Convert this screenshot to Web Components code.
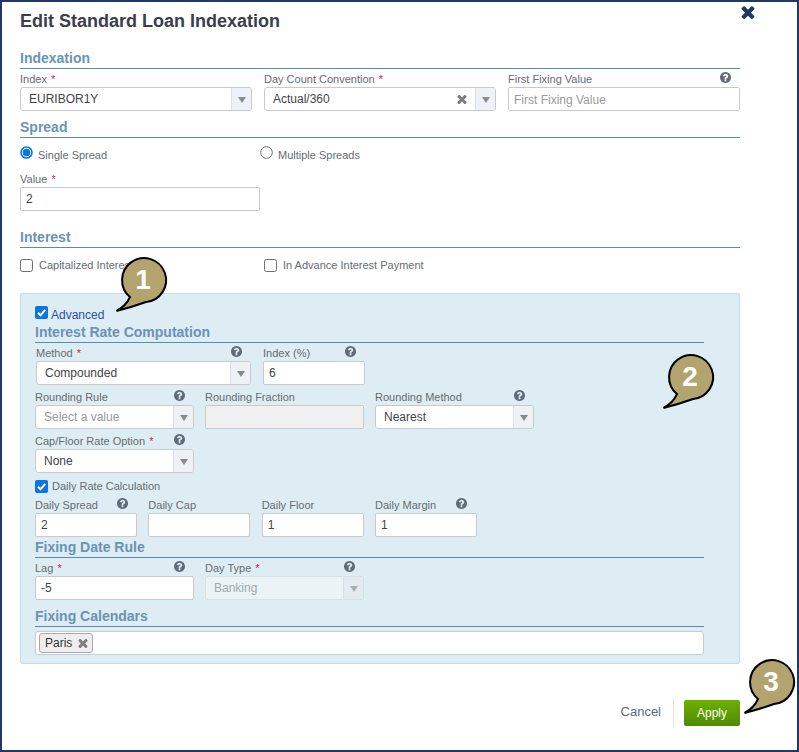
<!DOCTYPE html>
<html>
<head>
<meta charset="utf-8">
<title>Edit Standard Loan Indexation</title>
<style>
  html, body { margin: 0; padding: 0; background: #fff; }
  body { font-family: "Liberation Sans", Arial, sans-serif; }
  .row { display: grid; }
</style>
</head>
<body>
<script>
const HELP_PATH = "M1024 1376v-192q0-14-9-23t-23-9h-192q-14 0-23 9t-9 23v192q0 14 9 23t23 9h192q14 0 23-9t9-23zm256-672q0-88-55.500-163t-138.500-116-170-41q-243 0-371 213-15 24 8 42l132 100q7 6 19 6 16 0 25-12 53-68 86-92 34-24 86-24 48 0 85.500 26t37.500 59q0 38-20 61t-68 45q-63 28-115.500 86.500t-52.500 125.500v36q0 14 9 23t23 9h192q14 0 23-9t9-23q0-19 21.500-49.500t54.500-49.500q32-18 49-28.500t46-35 44.500-48 28-60.500 12.500-81zm384 192q0 209-103 385.500t-279.500 279.500-385.500 103-385.500-103-279.500-279.500-103-385.500 103-385.500 279.500-279.500 385.500-103 385.500 103 279.500 279.500 103 385.500z";
const TIMES_PATH = "M1490 1322q0 40-28 68l-136 136q-28 28-68 28t-68-28l-294-294-294 294q-28 28-68 28t-68-28l-136-136q-28-28-28-68t28-68l294-294-294-294q-28-28-28-68t28-68l136-136q28-28 68-28t68 28l294 294 294-294q28-28 68-28t68 28l136 136q28 28 28 68t-28 68l-294 294 294 294q28 28 28 68z";

const times = (size, color) => `<svg width="${size}" height="${size}" viewBox="250 250 1292 1292" style="display:block"><path fill="${color}" d="${TIMES_PATH}"/></svg>`;

class EditDialog extends HTMLElement {
  constructor() {
    super();
    this.attachShadow({ mode: "open" });
    this.shadowRoot.innerHTML = `
      <style>
        :host { display: block; box-sizing: border-box; width: 799px; height: 752px; border: 2px solid #1f3864; padding: 0 57px 0 18px; overflow: hidden; font-family: "Liberation Sans", Arial, sans-serif; }
        header { display: flex; justify-content: space-between; height: 46px; margin-right: -15px; }
        h1 { margin: 7px 0 0; font-size: 18px; line-height: 24px; font-weight: bold; color: #37404c; }
        .close { margin-top: 3px; }
        footer { display: flex; justify-content: flex-end; align-items: center; margin-top: 34px; height: 29px; }
      </style>
      <header><h1></h1><div class="close">${times(14, "#1f3864")}</div></header>
      <slot></slot>
      <footer><slot name="footer"></slot></footer>`;
  }
  connectedCallback() {
    this.shadowRoot.querySelector("h1").textContent = this.dataset.title;
  }
}

class SectionHeading extends HTMLElement {
  constructor() {
    super();
    this.attachShadow({ mode: "open" });
    this.shadowRoot.innerHTML = `
      <style>
        :host { display: block; height: 20px; border-bottom: 1px solid #5b8cae; font-size: 14px; line-height: 20px; font-weight: bold; color: #6b93b5; }
      </style>
      <slot></slot>`;
  }
}

class FormField extends HTMLElement {
  constructor() {
    super();
    this.attachShadow({ mode: "open" });
    this.shadowRoot.innerHTML = `
      <style>
        :host { display: block; min-width: 0; }
        .label { display: flex; justify-content: space-between; align-items: center; height: 18px; font-size: 11px; line-height: 18px; color: #666c72; white-space: nowrap; }
        .text { transform: translateY(1px); }
        .req { color: #d6174f; margin-left: 1px; }
        svg { display: block; margin: -1px 9.500px 0 0; }
      </style>
      <div class="label"><span class="text"></span></div>
      <slot></slot>`;
  }
  connectedCallback() {
    const label = this.shadowRoot.querySelector(".label");
    const text = this.shadowRoot.querySelector(".text");
    text.textContent = this.dataset.label;
    if (this.hasAttribute("data-required")) text.insertAdjacentHTML("beforeend", ' <span class="req">*</span>');
    if (this.hasAttribute("data-help")) label.insertAdjacentHTML("beforeend", `<svg width="11" height="11" viewBox="128 128 1536 1536"><path fill="#5f6b76" d="${HELP_PATH}"/></svg>`);
  }
}

class SelectBox extends HTMLElement {
  constructor() {
    super();
    this.attachShadow({ mode: "open" });
    this.shadowRoot.innerHTML = `
      <style>
        :host { display: flex; box-sizing: border-box; height: 24px; background: #fff; border: 1px solid #cacaca; border-radius: 3px; font-size: 12px; line-height: 22px; color: #444; overflow: hidden; }
        :host([data-disabled]) { background: #ecf3f7; border-color: #d8e0e4; color: #a3a9ad; }
        .value { flex: 1; padding-left: 8px; white-space: nowrap; }
        .value.ph { color: #9a9a9a; }
        .clear { align-self: center; margin-right: 8px; }
        .arrow { width: 19px; display: flex; align-items: center; justify-content: center; background: #eef1f5; border-left: 1px solid #dcdfe3; }
        :host([data-disabled]) .arrow { background: #e3ebf0; border-left-color: #d8e0e4; }
        .arrow i { width: 0; height: 0; margin-top: 1px; border: 4px solid transparent; border-top: 6px solid #8a8a8a; border-bottom: 0; }
        :host([data-disabled]) .arrow i { border-top-color: #a9b0b5; }
      </style>
      <span class="value"></span><span class="arrow"><i></i></span>`;
  }
  connectedCallback() {
    const value = this.shadowRoot.querySelector(".value");
    value.textContent = this.dataset.value || this.dataset.placeholder;
    if (!this.dataset.value) value.classList.add("ph");
    if (this.hasAttribute("data-clear")) value.insertAdjacentHTML("afterend", `<span class="clear">${times(10, "#7d7d7d")}</span>`);
  }
}

class TextBox extends HTMLElement {
  constructor() {
    super();
    this.attachShadow({ mode: "open" });
    this.shadowRoot.innerHTML = `
      <style>
        :host { display: block; box-sizing: border-box; height: 24px; background: #fff; border: 1px solid #cacaca; border-radius: 2px; padding-left: 5px; font-size: 12px; line-height: 23px; color: #444; white-space: nowrap; }
        :host([data-disabled]) { background: #f0f0f0; }
        :host([data-placeholder]) { color: #9a9a9a; line-height: 25px; }
      </style>
      <slot></slot>`;
  }
}

class CheckLine extends HTMLElement {
  constructor() {
    super();
    this.attachShadow({ mode: "open" });
    this.shadowRoot.innerHTML = `
      <style>
        :host { display: flex; align-items: center; gap: var(--gap, 6px); font-size: 11px; line-height: 14px; color: #666c72; white-space: nowrap; }
        svg { display: block; flex: none; margin-top: var(--mark-shift, -2px); }
        .text { transform: translateY(var(--text-shift, 0)); }
      </style>
      <span class="mark"></span><span class="text"><slot></slot></span>`;
  }
  connectedCallback() {
    const kind = this.dataset.kind || "check";
    const on = this.hasAttribute("data-on");
    let mark;
    if (kind === "radio") {
      mark = on
        ? `<circle cx="6.500" cy="6.500" r="5.500" fill="#fff" stroke="#0b75e0" stroke-width="1.600"/><circle cx="6.500" cy="6.500" r="3.800" fill="#0b75e0"/>`
        : `<circle cx="6.500" cy="6.500" r="5.800" fill="#fff" stroke="#6f6f6f" stroke-width="1"/>`;
    } else {
      mark = on
        ? `<rect width="13" height="13" rx="2" fill="#0b75e0"/><path d="M3 6.800 5.500 9.300 10.200 3.800" fill="none" stroke="#fff" stroke-width="2"/>`
        : `<rect x=".5" y=".5" width="12" height="12" rx="2" fill="#fff" stroke="#6f6f6f"/>`;
    }
    this.shadowRoot.querySelector(".mark").innerHTML = `<svg width="13" height="13" viewBox="0 0 13 13">${mark}</svg>`;
  }
}

class TagInput extends HTMLElement {
  constructor() {
    super();
    this.attachShadow({ mode: "open" });
    this.shadowRoot.innerHTML = `
      <style>
        :host { display: flex; align-items: center; box-sizing: border-box; height: 24px; padding-left: 3px; background: #fff; border: 1px solid #cacaca; border-radius: 3px; font-size: 12px; color: #333; }
        .tag { display: flex; align-items: center; gap: 6px; box-sizing: border-box; height: 20px; width: 54px; padding-left: 5px; background: #eee; border: 1px solid #aaa; border-radius: 3px; }
      </style>
      <span class="tag"><slot></slot>${times(10, "#7d7d7d")}</span>`;
  }
}

class NoteCallout extends HTMLElement {
  constructor() {
    super();
    this.attachShadow({ mode: "open" });
    this.shadowRoot.innerHTML = `
      <style>
        :host { position: absolute; display: block; width: 60px; height: 60px; }
        svg { display: block; overflow: visible; }
        text { font: bold 28px "Liberation Sans", Arial, sans-serif; fill: #fff; text-anchor: middle; }
      </style>
      <svg width="60" height="60" viewBox="-30 -25 60 60">
        <path fill="#b3a36f" stroke="#000" stroke-width="2" d="M-14 17A22 22 0 1 1 2 22Q-12 27-27.500 31-18 26-14 17Z"/>
        <text x="-1" y="8.500"></text>
      </svg>`;
  }
  connectedCallback() {
    this.shadowRoot.querySelector("text").textContent = this.dataset.n;
    this.style.left = (this.dataset.x - 30) + "px";
    this.style.top = (this.dataset.y - 25) + "px";
  }
}

class AdvancedPanel extends HTMLElement {
  constructor() {
    super();
    this.attachShadow({ mode: "open" });
    this.shadowRoot.innerHTML = `
      <style>
        :host { display: block; box-sizing: border-box; height: 371px; background: #deecf3; border: 1px solid #c5dde8; border-radius: 2px; padding: 12px 35px 8px 14px; }
      </style>
      <slot></slot>`;
  }
}

class FooterLink extends HTMLElement {
  constructor() {
    super();
    this.attachShadow({ mode: "open" });
    this.shadowRoot.innerHTML = `
      <style>
        :host { display: flex; align-items: center; height: 29px; padding: 0 12px 2px 0; box-sizing: border-box; margin-right: 10px; border-right: 1px solid #e2e2e2; font-size: 13px; color: #5d6a76; }
      </style>
      <slot></slot>`;
  }
}

class ApplyButton extends HTMLElement {
  constructor() {
    super();
    this.attachShadow({ mode: "open" });
    this.shadowRoot.innerHTML = `
      <style>
        :host { display: flex; align-items: center; justify-content: center; box-sizing: border-box; width: 56px; height: 26px; border-radius: 2px; background: linear-gradient(#6eb000, #4f8a00); font-size: 12px; color: #fff; }
      </style>
      <slot></slot>`;
  }
}

customElements.define("edit-dialog", EditDialog);
customElements.define("section-heading", SectionHeading);
customElements.define("form-field", FormField);
customElements.define("select-box", SelectBox);
customElements.define("text-box", TextBox);
customElements.define("check-line", CheckLine);
customElements.define("tag-input", TagInput);
customElements.define("note-callout", NoteCallout);
customElements.define("advanced-panel", AdvancedPanel);
customElements.define("footer-link", FooterLink);
customElements.define("apply-button", ApplyButton);
</script>

<edit-dialog data-title="Edit Standard Loan Indexation">
  <section-heading>Indexation</section-heading>
  <div class="row" style="grid-template-columns:232px 232px 232px;column-gap:12px">
    <form-field data-label="Index" data-required><select-box data-value="EURIBOR1Y"></select-box></form-field>
    <form-field data-label="Day Count Convention" data-required><select-box data-value="Actual/360" data-clear></select-box></form-field>
    <form-field data-label="First Fixing Value" data-help><text-box data-placeholder>First Fixing Value</text-box></form-field>
  </div>

  <section-heading style="margin-top:6px">Spread</section-heading>
  <div class="row" style="grid-template-columns:240px 240px;height:31px;padding-top:8px;box-sizing:border-box;align-content:start;--gap:5px;--text-shift:2px">
    <check-line data-kind="radio" data-on>Single Spread</check-line>
    <check-line data-kind="radio">Multiple Spreads</check-line>
  </div>
  <form-field data-label="Value" data-required style="width:240px"><text-box>2</text-box></form-field>

  <section-heading style="margin-top:16px">Interest</section-heading>
  <div class="row" style="grid-template-columns:244px 244px;height:45px;padding-top:11px;box-sizing:border-box;align-content:start;--text-shift:-1px">
    <check-line>Capitalized Interest</check-line>
    <check-line>In Advance Interest Payment</check-line>
  </div>

  <advanced-panel>
    <check-line data-on style="height:16px;font-size:12px;color:#2a4fa8;--gap:3px;--mark-shift:-3px;--text-shift:1px">Advanced</check-line>
    <section-heading>Interest Rate Computation</section-heading>
    <div class="row" style="grid-template-columns:215px 102px;column-gap:12px;margin-left:1px">
      <form-field data-label="Method" data-required data-help><select-box data-value="Compounded"></select-box></form-field>
      <form-field data-label="Index (%)" data-help><text-box>6</text-box></form-field>
    </div>
    <div class="row" style="grid-template-columns:159px 159px 159px;column-gap:11px;margin-top:2px">
      <form-field data-label="Rounding Rule" data-help><select-box data-placeholder="Select a value"></select-box></form-field>
      <form-field data-label="Rounding Fraction"><text-box data-disabled></text-box></form-field>
      <form-field data-label="Rounding Method" data-help><select-box data-value="Nearest"></select-box></form-field>
    </div>
    <div class="row" style="grid-template-columns:159px;margin-top:2px">
      <form-field data-label="Cap/Floor Rate Option" data-required data-help><select-box data-value="None"></select-box></form-field>
    </div>
    <check-line data-on style="height:18px;margin-top:4px;--gap:4px;--mark-shift:0">Daily Rate Calculation</check-line>
    <div class="row" style="grid-template-columns:102px 102px 102px 102px;column-gap:11.330px">
      <form-field data-label="Daily Spread" data-help><text-box>2</text-box></form-field>
      <form-field data-label="Daily Cap"><text-box></text-box></form-field>
      <form-field data-label="Daily Floor"><text-box>1</text-box></form-field>
      <form-field data-label="Daily Margin" data-help><text-box>1</text-box></form-field>
    </div>
    <section-heading>Fixing Date Rule</section-heading>
    <div class="row" style="grid-template-columns:159px 159px;column-gap:11px">
      <form-field data-label="Lag" data-required data-help><text-box>-5</text-box></form-field>
      <form-field data-label="Day Type" data-required data-help><select-box data-value="Banking" data-disabled></select-box></form-field>
    </div>
    <section-heading style="margin-top:6px">Fixing Calendars</section-heading>
    <tag-input style="margin-top:4px">Paris</tag-input>
  </advanced-panel>

  <footer-link slot="footer">Cancel</footer-link>
  <apply-button slot="footer">Apply</apply-button>
</edit-dialog>

<note-callout data-n="1" data-x="144" data-y="280"></note-callout>
<note-callout data-n="2" data-x="691" data-y="377"></note-callout>
<note-callout data-n="3" data-x="772" data-y="682"></note-callout>
</body>
</html>
